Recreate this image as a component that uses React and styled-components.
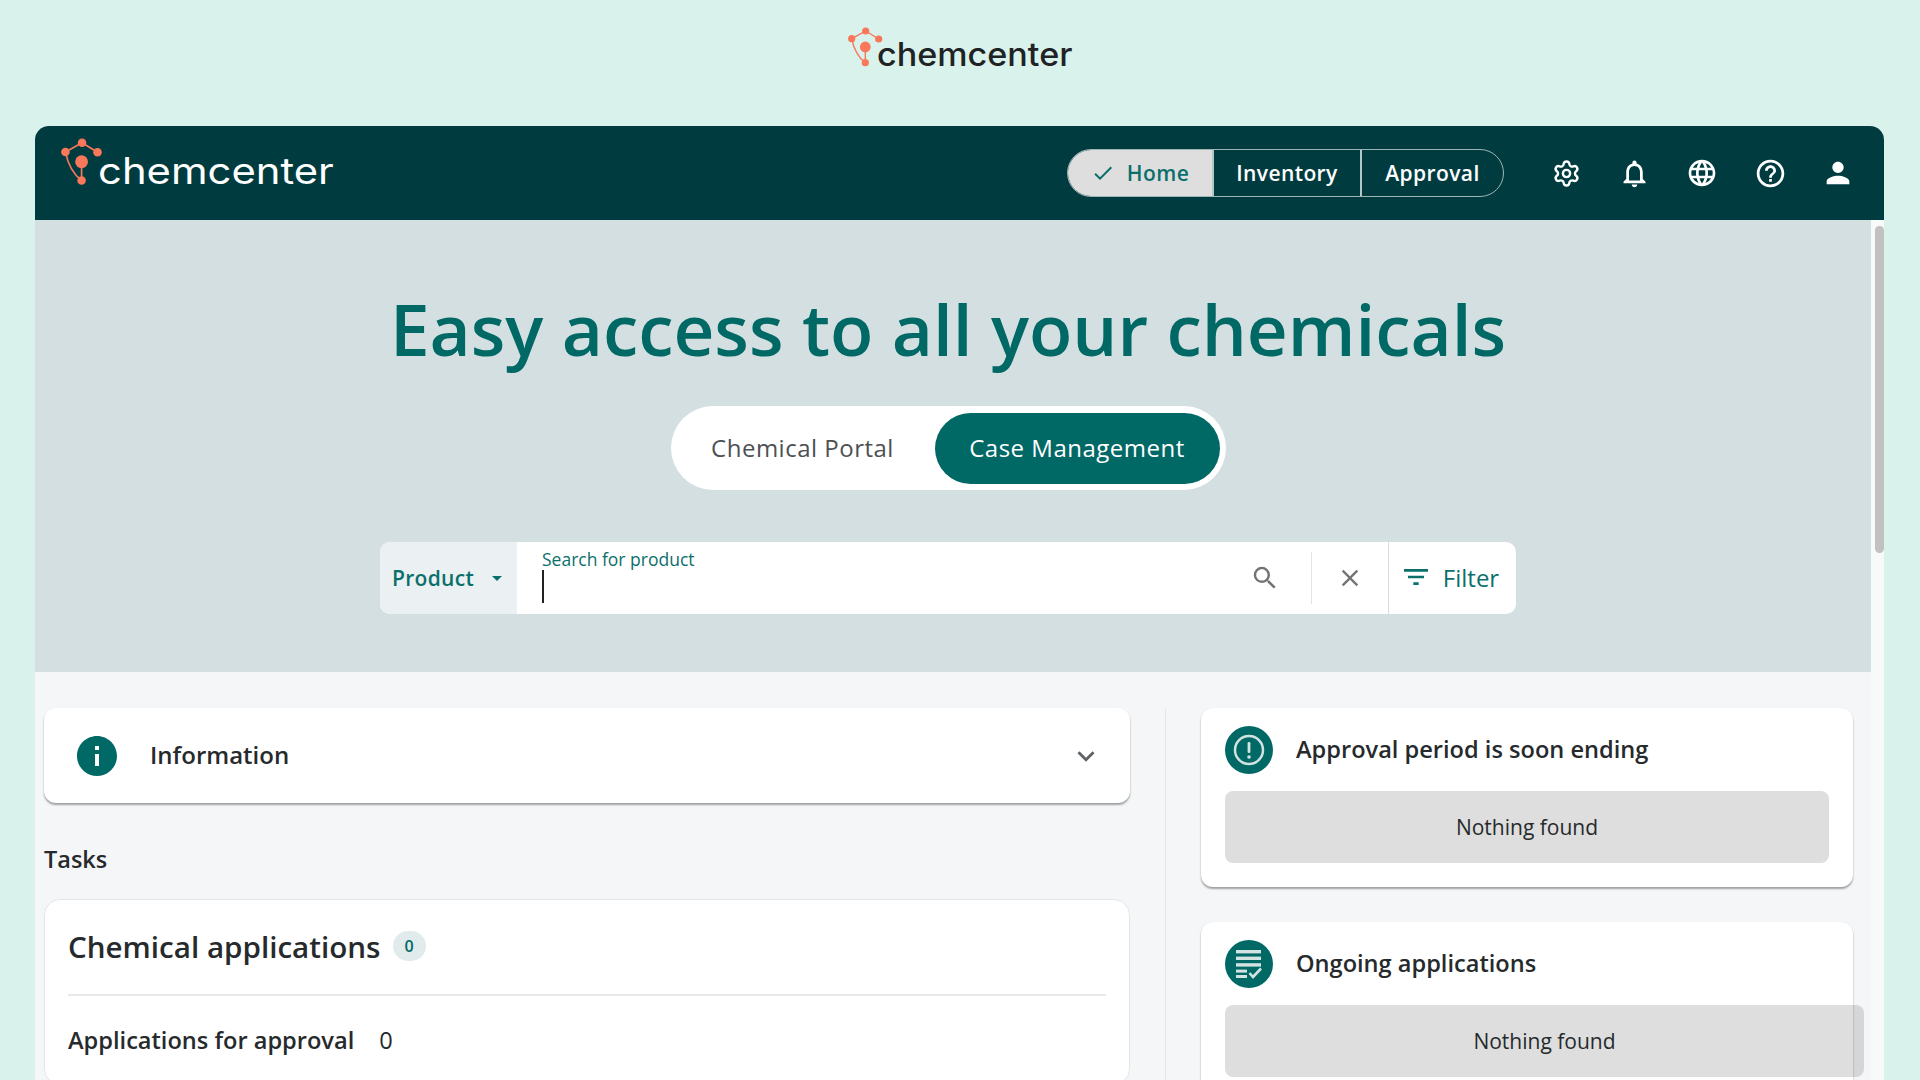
import { Settings } from "lucide-react";
import {
  MdArrowDropDown,
  MdCheck,
  MdClose,
  MdFilterList,
  MdHelpOutline,
  MdInfo,
  MdKeyboardArrowDown,
  MdLanguage,
  MdNotificationsNone,
  MdPerson,
  MdSearch,
} from "react-icons/md";
import styled, { createGlobalStyle } from "styled-components";

const teal = "#006865";
const dark = "#003c3f";
const ink = "#262a2c";

const GlobalStyle = createGlobalStyle`
  html, body {
    margin: 0;
    padding: 0;
    height: 100%;
    overflow: hidden;
    background: #d9f3ec;
    font-family: "Open Sans", "Liberation Sans", sans-serif;
    color: ${ink};
  }
  * {
    box-sizing: border-box;
  }
`;

const Page = styled.div`
  display: flex;
  flex-direction: column;
  height: 1080px;
  overflow: hidden;
`;

const TopBar = styled.div`
  flex: 0 0 126px;
  display: flex;
  justify-content: center;
  align-items: flex-start;
  padding: 27px 8px 0 0;
`;

const LogoWrap = styled.div`
  display: flex;
  align-items: flex-start;
`;

const LogoMark = styled.svg`
  display: block;
  flex: none;
`;

// the wordmark is a wide face, so Inter gets stretched to the same width
const LogoText = styled.span`
  display: inline-block;
  font-family: "Inter", sans-serif;
  font-weight: ${(p) => p.$weight};
  font-size: ${(p) => p.$size}px;
  line-height: 1;
  color: ${(p) => p.$color};
  margin: ${(p) => p.$top}px 0 0 ${(p) => p.$left}px;
  transform: scaleX(${(p) => p.$stretch});
  transform-origin: left center;
`;

const Win = styled.div`
  flex: 1;
  min-height: 0;
  margin: 0 36px 0 35px;
  display: flex;
  flex-direction: column;
  border-radius: 14px 14px 0 0;
  overflow: hidden;
  background: #f4f6f8;
`;

const Header = styled.header`
  flex: 0 0 94px;
  background: ${dark};
  display: flex;
  align-items: flex-start;
  justify-content: space-between;
  padding: 12px 29px 0 26px;
`;

const HeaderRight = styled.div`
  display: flex;
  align-items: center;
  margin-top: 11px;
`;

const NavGroup = styled.nav`
  display: flex;
  height: 48px;
  border: 1px solid #9fb4b5;
  border-radius: 24px;
  overflow: hidden;
  margin-right: 45px;
`;

const NavItem = styled.div`
  width: ${(p) => p.$width}px;
  display: flex;
  align-items: center;
  justify-content: center;
  gap: 12px;
  font-size: 21px;
  font-weight: 600;
  letter-spacing: 0.4px;
  color: ${(p) => (p.$active ? "#0b6f6c" : "#fff")};
  background: ${(p) => (p.$active ? "#dedede" : "transparent")};
  & + & {
    border-left: 2px solid #b6c6c7;
  }
`;

const IconRow = styled.div`
  display: flex;
  align-items: center;
  gap: 34px;
  color: #fff;
  svg {
    display: block;
  }
`;

const IconSlot = styled.div`
  width: 34px;
  height: 34px;
  display: flex;
  align-items: center;
  justify-content: center;
`;

const Body = styled.div`
  position: relative;
  flex: 1;
  min-height: 0;
  overflow: hidden;
  padding-right: 13px;
`;

const ScrollTrack = styled.div`
  position: absolute;
  top: 0;
  right: 0;
  bottom: 0;
  width: 13px;
  background: #f8f9f9;
`;

const ScrollThumb = styled.div`
  position: absolute;
  top: 6px;
  right: 0;
  width: 9px;
  height: 327px;
  border-radius: 5px;
  background: #c1c1c1;
`;

const Hero = styled.section`
  height: 452px;
  background: #d3dfe1;
  display: flex;
  flex-direction: column;
  align-items: center;
  padding: 65px 10px 0 0;
`;

const Title = styled.h1`
  margin: 0;
  font-size: 71px;
  line-height: 88px;
  font-weight: 600;
  color: ${teal};
  white-space: nowrap;
`;

const PortalSwitch = styled.div`
  display: flex;
  align-items: center;
  width: 555px;
  height: 84px;
  margin-top: 33px;
  padding: 0 6px 0 0;
  background: #fff;
  border-radius: 42px;
`;

const PortalTab = styled.div`
  display: flex;
  align-items: center;
  justify-content: center;
  height: 71px;
  padding-bottom: 2px;
  flex: ${(p) => (p.$active ? "0 0 285px" : "1")};
  border-radius: 36px;
  font-size: 24px;
  letter-spacing: 0.5px;
  color: ${(p) => (p.$active ? "#fff" : "#4d5153")};
  background: ${(p) => (p.$active ? teal : "transparent")};
`;

const SearchBar = styled.div`
  display: flex;
  width: 1136px;
  height: 72px;
  margin-top: 52px;
  border-radius: 10px;
  overflow: hidden;
  background: #fff;
`;

const ProductSelect = styled.div`
  flex: 0 0 137px;
  display: flex;
  align-items: center;
  padding-left: 12px;
  gap: 11px;
  background: #ebf1f2;
  color: #0b6f6c;
  font-size: 21px;
  font-weight: 600;
  letter-spacing: 0.3px;
  svg {
    color: #0b6f6c;
  }
`;

const SearchField = styled.div`
  flex: 1;
  display: flex;
  flex-direction: column;
  padding: 5px 0 0 25px;
`;

const SearchLabel = styled.label`
  font-size: 17.5px;
  line-height: 25px;
  color: #0b6f6c;
`;

const Caret = styled.span`
  display: block;
  width: 2px;
  height: 33px;
  margin-top: -2px;
  background: #222;
`;

const SearchAction = styled.div`
  flex: 0 0 ${(p) => p.$width}px;
  display: flex;
  align-items: center;
  justify-content: center;
  color: #747474;
`;

const ClearAction = styled(SearchAction)`
  position: relative;
  &::before {
    content: "";
    position: absolute;
    left: 0;
    top: 10px;
    bottom: 10px;
    width: 1px;
    background: #e4e4e4;
  }
`;

const FilterAction = styled.div`
  flex: 0 0 128px;
  display: flex;
  align-items: center;
  justify-content: center;
  gap: 11px;
  padding: 0 6px 2px 0;
  border-left: 1px solid #d8dcdd;
  color: #0b6f6c;
  font-size: 24px;
`;

const Content = styled.div`
  display: grid;
  grid-template-columns: 1086px 652px;
  column-gap: 71px;
  padding: 36px 0 0 9px;
`;

const LeftCol = styled.div`
  position: relative;
  &::after {
    content: "";
    position: absolute;
    top: 0;
    bottom: -400px;
    right: -36px;
    width: 1px;
    background: #e3e6e8;
  }
`;

const InfoCard = styled.div`
  height: 95px;
  display: flex;
  align-items: center;
  padding: 0 27px 0 29px;
  background: #fff;
  border-radius: 12px;
  box-shadow: 0 2px 2px rgba(0, 0, 0, 0.35), 0 0 1px rgba(0, 0, 0, 0.08);
  svg {
    display: block;
    flex: none;
  }
`;

const InfoLabel = styled.div`
  flex: 1;
  margin: -2px 0 0 29px;
  font-size: 24px;
  font-weight: 600;
`;

const SectionTitle = styled.h2`
  margin: 39px 0 0;
  font-size: 23.5px;
  line-height: 34px;
  font-weight: 600;
`;

const TaskCard = styled.div`
  margin-top: 23px;
  padding: 0 23px;
  background: #fff;
  border: 1px solid #e3e6e8;
  border-radius: 16px;
`;

const TaskHead = styled.div`
  display: flex;
  align-items: center;
  gap: 12px;
  height: 96px;
  padding-bottom: 2px;
  border-bottom: 2px solid #e8eaeb;
`;

const TaskTitle = styled.div`
  font-size: 29.6px;
  font-weight: 600;
`;

const CountBadge = styled.span`
  width: 33px;
  height: 30px;
  border-radius: 15px;
  display: flex;
  align-items: center;
  justify-content: center;
  background: #e1ebec;
  color: ${teal};
  font-size: 16px;
  font-weight: 600;
`;

const TaskRow = styled.div`
  display: flex;
  gap: 25px;
  align-items: center;
  height: 88px;
  font-size: 23.6px;
`;

const TaskLabel = styled.span`
  font-weight: 600;
`;

const RightCol = styled.div`
  display: flex;
  flex-direction: column;
  gap: 35px;
`;

const StatusCard = styled.div`
  padding: 18px 24px 24px;
  background: #fff;
  border-radius: 12px;
  box-shadow: 0 2px 2px rgba(0, 0, 0, 0.35), 0 0 1px rgba(0, 0, 0, 0.08);
`;

const StatusHead = styled.div`
  display: flex;
  align-items: center;
  gap: 23px;
  height: 48px;
  font-size: 23.6px;
  font-weight: 600;
`;

const StatusLabel = styled.span`
  margin-top: -3px;
`;

const StatusIcon = styled.div`
  width: 48px;
  height: 48px;
  border-radius: 50%;
  flex: none;
  display: flex;
  align-items: center;
  justify-content: center;
  background: ${teal};
`;

const EmptyBox = styled.div`
  height: 72px;
  margin: 17px ${(p) => (p.$overflow ? "-35px" : "0")} 0 0;
  display: flex;
  align-items: center;
  justify-content: center;
  border-radius: 8px;
  background: rgba(0, 0, 0, 0.13);
  font-size: 21px;
`;

const ChemLogo = ({ scale }) => (
  <LogoMark
    width={35 * scale}
    height={40 * scale}
    viewBox="0 0 35 40"
    fill="none"
  >
    <path
      d="M3.7 11.7 L17.7 4 L30.7 12 M3.7 11.7 C6 23 11 31 17.3 35.7 M17.3 20 V35.7"
      stroke="#f9775a"
      strokeWidth="1.4"
    />
    <circle cx="3.7" cy="11.7" r="3.6" fill="#f9775a" />
    <circle cx="17.7" cy="4" r="3.6" fill="#f9775a" />
    <circle cx="30.7" cy="12" r="3.6" fill="#f9775a" />
    <circle cx="17.3" cy="20" r="5.4" fill="#f9775a" />
    <circle cx="17.3" cy="35.7" r="3.6" fill="#f9775a" />
  </LogoMark>
);

const AlertGlyph = () => (
  <svg width="34" height="34" viewBox="0 0 34 34" fill="none">
    <circle cx="17" cy="17" r="14" stroke="#d3e3e2" strokeWidth="2.5" />
    <rect x="15.6" y="9" width="2.8" height="11" rx="1.2" fill="#d3e3e2" />
    <circle cx="17" cy="24" r="1.8" fill="#d3e3e2" />
  </svg>
);

const ListGlyph = () => (
  <svg width="30" height="32" viewBox="0 0 30 32" fill="#d3e3e2">
    <rect x="2" y="2" width="25" height="3.4" />
    <rect x="2" y="8.6" width="25" height="3.4" />
    <rect x="2" y="15.2" width="25" height="3.4" />
    <rect x="2" y="21.6" width="11" height="3" />
    <rect x="2" y="27" width="11" height="3" />
    <path
      d="M15.5 25 L19 29 L27 20.5"
      fill="none"
      stroke="#d3e3e2"
      strokeWidth="2.6"
    />
  </svg>
);

const App = () => {
  return (
    <Page>
      <GlobalStyle />
      <TopBar>
        <LogoWrap>
          <ChemLogo scale={1} />
          <LogoText
            $size={32.5}
            $weight={500}
            $stretch={1.05}
            $color="#1f2325"
            $top={12}
            $left={-6}
          >
            chemcenter
          </LogoText>
        </LogoWrap>
      </TopBar>
      <Win>
        <Header>
          <LogoWrap>
            <ChemLogo scale={1.19} />
            <LogoText
              $size={36.5}
              $weight={400}
              $stretch={1.145}
              $color="#fff"
              $top={15}
              $left={-5}
            >
              chemcenter
            </LogoText>
          </LogoWrap>
          <HeaderRight>
            <NavGroup>
              <NavItem $active $width={144}>
                <MdCheck size={24} />
                Home
              </NavItem>
              <NavItem $width={148}>Inventory</NavItem>
              <NavItem $width={143}>Approval</NavItem>
            </NavGroup>
            <IconRow>
              <IconSlot>
                <Settings size={29} strokeWidth={2} />
              </IconSlot>
              <IconSlot>
                <MdNotificationsNone size={33} />
              </IconSlot>
              <IconSlot>
                <MdLanguage size={32} />
              </IconSlot>
              <IconSlot>
                <MdHelpOutline size={33} />
              </IconSlot>
              <IconSlot>
                <MdPerson size={34} />
              </IconSlot>
            </IconRow>
          </HeaderRight>
        </Header>
        <Body>
          <Hero>
            <Title>Easy access to all your chemicals</Title>
            <PortalSwitch>
              <PortalTab>Chemical Portal</PortalTab>
              <PortalTab $active>Case Management</PortalTab>
            </PortalSwitch>
            <SearchBar>
              <ProductSelect>
                Product
                <MdArrowDropDown size={24} />
              </ProductSelect>
              <SearchField>
                <SearchLabel>Search for product</SearchLabel>
                <Caret />
              </SearchField>
              <SearchAction $width={93}>
                <MdSearch size={30} />
              </SearchAction>
              <ClearAction $width={77}>
                <MdClose size={28} />
              </ClearAction>
              <FilterAction>
                <MdFilterList size={32} />
                Filter
              </FilterAction>
            </SearchBar>
          </Hero>
          <Content>
            <LeftCol>
              <InfoCard>
                <MdInfo size={48} color={teal} />
                <InfoLabel>Information</InfoLabel>
                <MdKeyboardArrowDown size={34} color="#5f6366" />
              </InfoCard>
              <SectionTitle>Tasks</SectionTitle>
              <TaskCard>
                <TaskHead>
                  <TaskTitle>Chemical applications</TaskTitle>
                  <CountBadge>0</CountBadge>
                </TaskHead>
                <TaskRow>
                  <TaskLabel>Applications for approval</TaskLabel>
                  <span>0</span>
                </TaskRow>
              </TaskCard>
            </LeftCol>
            <RightCol>
              <StatusCard>
                <StatusHead>
                  <StatusIcon>
                    <AlertGlyph />
                  </StatusIcon>
                  <StatusLabel>Approval period is soon ending</StatusLabel>
                </StatusHead>
                <EmptyBox>Nothing found</EmptyBox>
              </StatusCard>
              <StatusCard>
                <StatusHead>
                  <StatusIcon>
                    <ListGlyph />
                  </StatusIcon>
                  <StatusLabel>Ongoing applications</StatusLabel>
                </StatusHead>
                <EmptyBox $overflow>Nothing found</EmptyBox>
              </StatusCard>
            </RightCol>
          </Content>
          <ScrollTrack>
            <ScrollThumb />
          </ScrollTrack>
        </Body>
      </Win>
    </Page>
  );
};

export default App;
